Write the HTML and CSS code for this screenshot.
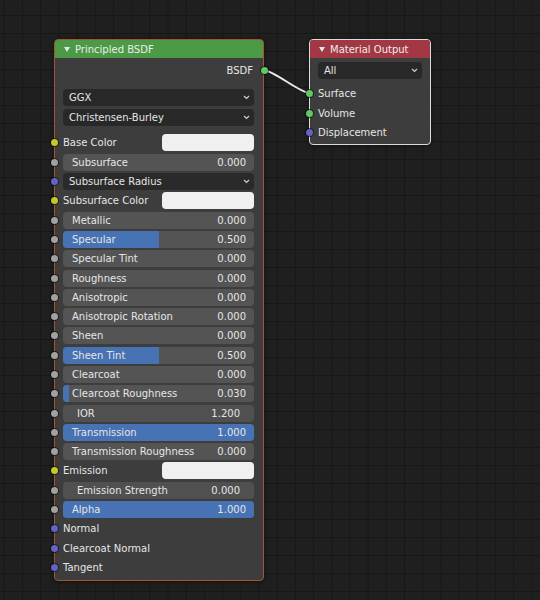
FILE: index.html
```html
<!DOCTYPE html>
<html>
<head>
<meta charset="utf-8">
<link rel="stylesheet" href="styles.css">
</head>
<body>
<div class="canvas">
  <svg class="links" width="540" height="600" viewBox="0 0 540 600">
    <path d="M264 70 C 274 71, 299 92, 309 93" fill="none" stroke="#e8e8e8" stroke-width="2"/>
  </svg>

  <div class="node principled">
    <div class="header green">
      <svg class="tri" width="6" height="5" viewBox="0 0 6 5"><polygon points="0,0 6,0 3,5" fill="#e6e6e6"/></svg>
      <span>Principled BSDF</span>
    </div>
    <div class="body">
      <div class="row out-row"><span class="out-label">BSDF</span><i class="sock out s-green"></i></div>
      <div class="dd-group">
        <div class="row dd-row"><div class="dropdown"><span>GGX</span><svg class="chev" width="7" height="5" viewBox="0 0 7 5"><path d="M1 1 L3.5 3.5 L6 1" fill="none" stroke="#cfcfcf" stroke-width="1.2"/></svg></div></div>
        <div class="row dd-row tall"><div class="dropdown"><span>Christensen-Burley</span><svg class="chev" width="7" height="5" viewBox="0 0 7 5"><path d="M1 1 L3.5 3.5 L6 1" fill="none" stroke="#cfcfcf" stroke-width="1.2"/></svg></div></div>
      </div>
      <div class="inputs">
        <div class="row"><i class="sock s-yellow"></i><span class="lbl">Base Color</span><div class="color"></div></div>
        <div class="row"><i class="sock s-gray"></i><div class="field"><span>Subsurface</span><span>0.000</span></div></div>
        <div class="row"><i class="sock s-purple"></i><div class="dropdown vec"><span>Subsurface Radius</span><svg class="chev" width="7" height="5" viewBox="0 0 7 5"><path d="M1 1 L3.5 3.5 L6 1" fill="none" stroke="#cfcfcf" stroke-width="1.2"/></svg></div></div>
        <div class="row"><i class="sock s-yellow"></i><span class="lbl">Subsurface Color</span><div class="color"></div></div>
        <div class="row"><i class="sock s-gray"></i><div class="field"><span>Metallic</span><span>0.000</span></div></div>
        <div class="row"><i class="sock s-gray"></i><div class="field"><b class="fill" style="width:50%"></b><span>Specular</span><span>0.500</span></div></div>
        <div class="row"><i class="sock s-gray"></i><div class="field"><span>Specular Tint</span><span>0.000</span></div></div>
        <div class="row"><i class="sock s-gray"></i><div class="field"><span>Roughness</span><span>0.000</span></div></div>
        <div class="row"><i class="sock s-gray"></i><div class="field"><span>Anisotropic</span><span>0.000</span></div></div>
        <div class="row"><i class="sock s-gray"></i><div class="field"><span>Anisotropic Rotation</span><span>0.000</span></div></div>
        <div class="row"><i class="sock s-gray"></i><div class="field"><span>Sheen</span><span>0.000</span></div></div>
        <div class="row"><i class="sock s-gray"></i><div class="field"><b class="fill" style="width:50%"></b><span>Sheen Tint</span><span>0.500</span></div></div>
        <div class="row"><i class="sock s-gray"></i><div class="field"><span>Clearcoat</span><span>0.000</span></div></div>
        <div class="row"><i class="sock s-gray"></i><div class="field"><b class="fill" style="width:3%"></b><span>Clearcoat Roughness</span><span>0.030</span></div></div>
        <div class="row"><i class="sock s-gray"></i><div class="field num"><span>IOR</span><span>1.200</span></div></div>
        <div class="row"><i class="sock s-gray"></i><div class="field"><b class="fill" style="width:100%"></b><span>Transmission</span><span>1.000</span></div></div>
        <div class="row"><i class="sock s-gray"></i><div class="field"><span>Transmission Roughness</span><span>0.000</span></div></div>
        <div class="row"><i class="sock s-yellow"></i><span class="lbl">Emission</span><div class="color"></div></div>
        <div class="row"><i class="sock s-gray"></i><div class="field num"><span>Emission Strength</span><span>0.000</span></div></div>
        <div class="row"><i class="sock s-gray"></i><div class="field"><b class="fill" style="width:100%"></b><span>Alpha</span><span>1.000</span></div></div>
        <div class="row"><i class="sock s-purple"></i><span class="lbl">Normal</span></div>
        <div class="row"><i class="sock s-purple"></i><span class="lbl">Clearcoat Normal</span></div>
        <div class="row"><i class="sock s-purple"></i><span class="lbl">Tangent</span></div>
      </div>
    </div>
  </div>

  <div class="node output">
    <div class="header red">
      <svg class="tri" width="6" height="5" viewBox="0 0 6 5"><polygon points="0,0 6,0 3,5" fill="#e6e6e6"/></svg>
      <span>Material Output</span>
    </div>
    <div class="body">
      <div class="row out-row"><div class="dropdown"><span>All</span><svg class="chev" width="7" height="5" viewBox="0 0 7 5"><path d="M1 1 L3.5 3.5 L6 1" fill="none" stroke="#cfcfcf" stroke-width="1.2"/></svg></div></div>
      <div class="inputs">
        <div class="row"><i class="sock s-green"></i><span class="lbl">Surface</span></div>
        <div class="row"><i class="sock s-green"></i><span class="lbl">Volume</span></div>
        <div class="row"><i class="sock s-purple"></i><span class="lbl">Displacement</span></div>
      </div>
    </div>
  </div>
</div>
</body>
</html>
```

FILE: styles.css
```css
* { box-sizing: border-box; }
html, body { margin: 0; padding: 0; background: #1f1f1f; }
body {
  font-family: "DejaVu Sans", "Liberation Sans", sans-serif;
  font-size: 10px;
  color: #e6e6e6;
}
.canvas {
  position: relative;
  width: 540px;
  height: 600px;
  overflow: hidden;
  background-color: #1f1f1f;
  background-image:
    linear-gradient(to right, #171717 1px, transparent 1px),
    linear-gradient(to bottom, #171717 1px, transparent 1px);
  background-size: 18.2px 18px, 18.2px 18px;
  background-position: 3.9px 15px, 3.9px 15px;
}
.links { position: absolute; left: 0; top: 0; }

.node {
  position: absolute;
  top: 39px;
  background: #3d3d3d;
  border-radius: 4px;
  display: flex;
  flex-direction: column;
  box-shadow: 0 1px 4px rgba(0,0,0,0.45);
}
.principled {
  left: 54px;
  width: 210px;
  border: 1px solid #a3562e;
}
.output {
  left: 309px;
  width: 122px;
  border: 1px solid #dcdcdc;
}
.header {
  height: 18px;
  display: flex;
  align-items: center;
  padding-left: 9px;
  gap: 5px;
  border-radius: 3px 3px 0 0;
  color: #ececec;
  font-size: 10px;
}
.header .tri { flex: none; }
.green { background: #4c9a45; }
.red { background: #a33845; }

.body {
  display: flex;
  flex-direction: column;
  padding: 0 9px 3px 8px;
}
.output .body { padding: 0 8px 2px 8px; }

.row {
  position: relative;
  height: 19.3px;
  display: flex;
  align-items: center;
}
.out-row { margin-top: 3px; height: 18px; }
.out-label { margin-left: auto; margin-right: 1px; }

.dd-group { margin-top: 8px; display: flex; flex-direction: column; }
.dd-row { height: 20px; }
.dd-row.tall { height: 21px; }
.inputs { margin-top: 5.3px; display: flex; flex-direction: column; }

.sock {
  position: absolute;
  left: -12.5px;
  top: 50%;
  width: 7px;
  height: 7px;
  margin-top: -3.5px;
  border-radius: 50%;
  box-shadow: 0 0 0 1px rgba(0,0,0,0.55);
}
.sock.out { left: auto; right: -13.5px; }
.s-green { background: #63c763; }
.s-yellow { background: #c7c729; }
.s-gray { background: #a1a1a1; }
.s-purple { background: #6363c7; }

.lbl { white-space: nowrap; }

.dropdown {
  flex: 1;
  height: 17px;
  background: #282828;
  border-radius: 4px;
  display: flex;
  align-items: center;
  justify-content: space-between;
  padding: 0 4px 0 6px;
  color: #e6e6e6;
}
.dropdown.vec { background: #2a2a2a; }
.chev { flex: none; }

.field {
  position: relative;
  flex: 1;
  height: 17px;
  background: #545454;
  border-radius: 4px;
  overflow: hidden;
  display: flex;
  align-items: center;
  justify-content: space-between;
  padding: 0 8px 0 9px;
  color: #e6e6e6;
  white-space: nowrap;
}
.field.num { padding: 0 14px 0 14px; background: #505050; }
.field span { position: relative; }
.fill {
  position: absolute;
  left: 0;
  top: 0;
  bottom: 0;
  background: #4772b3;
}
.color {
  margin-left: auto;
  width: 92px;
  height: 17px;
  background: #f0f0f0;
  border-radius: 4px;
}
```
